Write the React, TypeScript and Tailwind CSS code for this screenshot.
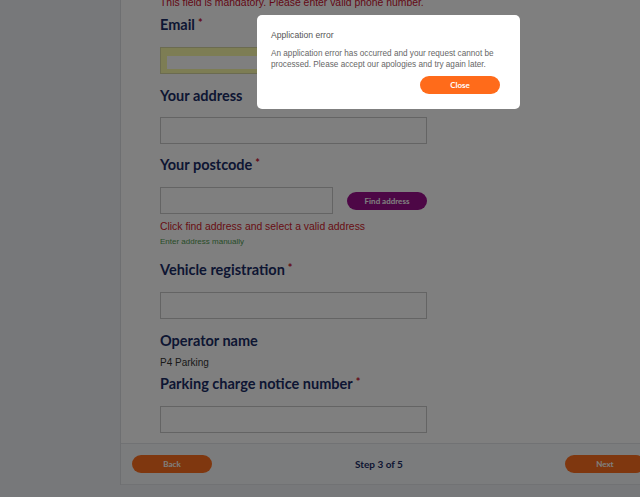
import React from 'react';

const heading = "font-['Lato',sans-serif] text-[14.5px] font-bold leading-[18px] text-[#1b2d66]";
const input = 'h-[27px] w-[267px] border border-[#c9c9c9] bg-white';

function Label({ text, required }: { text: string; required?: boolean }) {
  return (
    <h3 className={heading}>
      {text}
      {required && <span className="relative -top-[3px] ml-[3px] text-[11px] text-[#c8102e]">*</span>}
    </h3>
  );
}

function Pill({ children, className = '' }: { children: React.ReactNode; className?: string }) {
  return (
    <button
      className={`flex h-[18px] w-[80px] items-center justify-center rounded-full font-['Lato',sans-serif] text-[8px] font-bold text-white ${className}`}
    >
      {children}
    </button>
  );
}

export default function App() {
  return (
    <div className="relative h-[497px] w-[640px] overflow-hidden bg-[#eef0f4] font-['Liberation_Sans',Arial,sans-serif]">
      {/* Form panel */}
      <div className="ml-[120px] w-[560px] border-l border-[#dcdee2] bg-white">
        <div className="flex flex-col pl-[39px]">
          <p className="-mt-[4px] text-[10.4px] leading-[13px] text-[#c8102e]">
            This field is mandatory. Please enter valid phone number.
          </p>

          <div className="mt-[7px]">
            <Label text="Email" required />
          </div>
          <div className="mt-[12px] flex h-[27px] w-[267px] flex-col border border-[#d6d6a0] bg-[#fafaa8] pt-[8px] pl-[6px]">
            <div className="h-[13px] w-[93px] bg-white" />
          </div>

          <div className="mt-[13px]">
            <Label text="Your address" />
          </div>
          <div className={`mt-[12px] ${input}`} />

          <div className="mt-[12px]">
            <Label text="Your postcode" required />
          </div>
          <div className="mt-[12px] flex items-center gap-[14px]">
            <div className="h-[27px] w-[173px] border border-[#c9c9c9] bg-white" />
            <Pill className="bg-[#9a0f8c]">Find address</Pill>
          </div>
          <p className="mt-[6px] text-[10.4px] leading-[13px] text-[#d0202a]">
            Click find address and select a valid address
          </p>
          <p className="mt-[4px] text-[8px] leading-[10px] text-[#4f9a4f]">Enter address manually</p>

          <div className="mt-[14px]">
            <Label text="Vehicle registration" required />
          </div>
          <div className={`mt-[12px] ${input}`} />

          <div className="mt-[13px]">
            <Label text="Operator name" />
          </div>
          <p className="mt-[6px] text-[10px] leading-[13px] text-[#333]">P4 Parking</p>

          <div className="mt-[6px]">
            <Label text="Parking charge notice number" required />
          </div>
          <div className={`mt-[12px] ${input}`} />
        </div>

        {/* Footer */}
        <div className="mt-[10px] flex h-[42px] items-center border-y border-[#e2e4e8] bg-[#f7f8fa] pl-[11px]">
          <Pill className="bg-[#ff6f1e]">Back</Pill>
          <span className="ml-[143px] font-['Lato',sans-serif] text-[10px] font-bold text-[#1b2d66]">Step 3 of 5</span>
          <Pill className="ml-[162px] bg-[#ff6f1e]">Next</Pill>
        </div>
      </div>

      {/* Dim overlay */}
      <div className="absolute inset-0 bg-black/50" />

      {/* Error dialog */}
      <div className="absolute top-[15px] left-[257px] flex w-[263px] flex-col rounded-[5px] bg-white px-[14px] pt-[15px] pb-[15px]">
        <p className="text-[8.6px] leading-[11px] text-[#555]">Application error</p>
        <p className="mt-[7px] text-[8.2px] leading-[11px] text-[#666]">
          An application error has occurred and your request cannot be processed. Please accept our apologies and try
          again later.
        </p>
        <div className="mt-[6px] flex justify-end pr-[6px]">
          <Pill className="bg-[#ff6b1a]">Close</Pill>
        </div>
      </div>
    </div>
  );
}
